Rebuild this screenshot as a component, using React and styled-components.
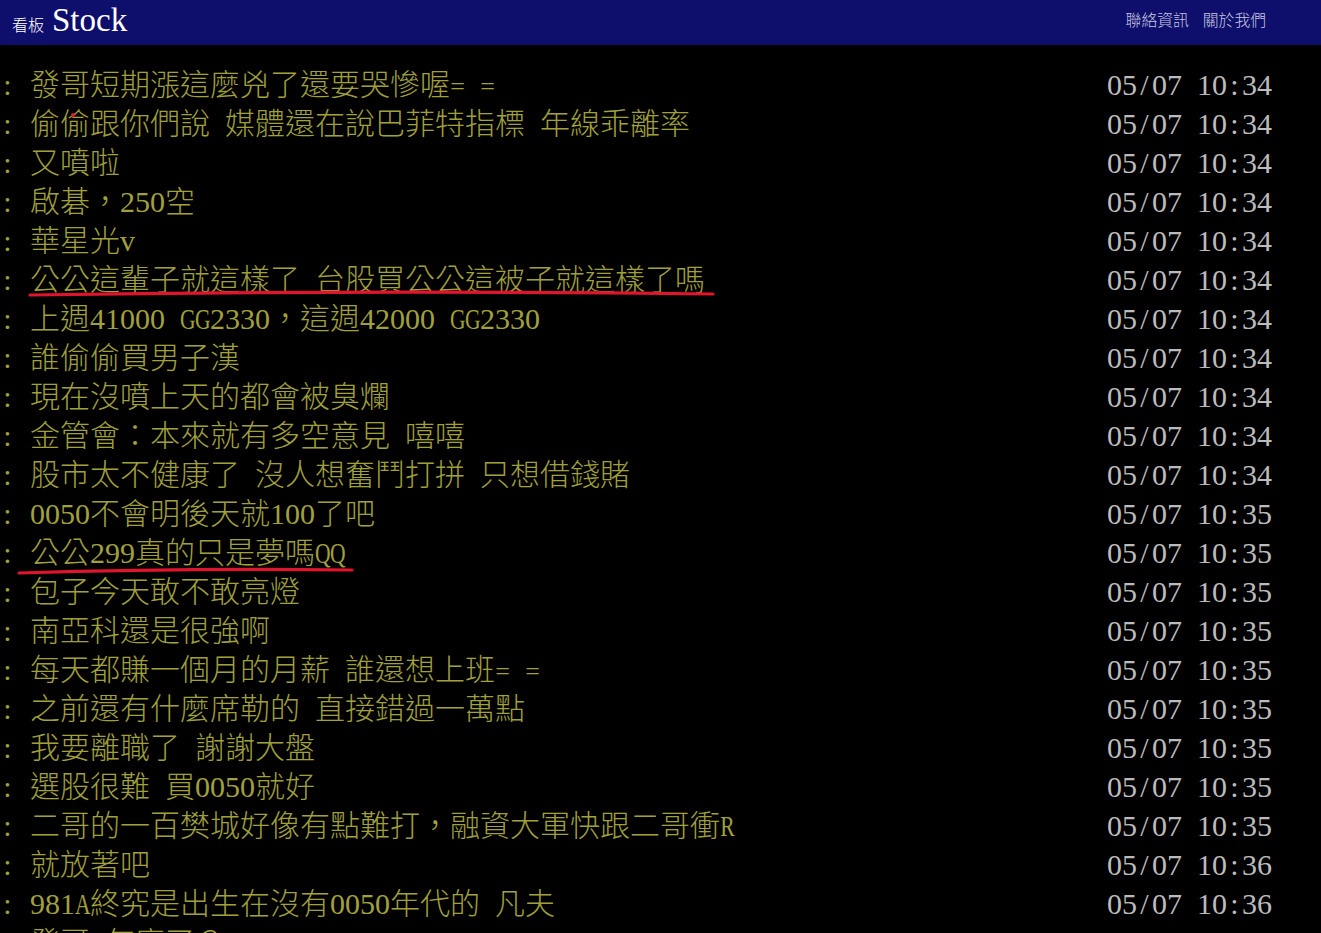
import React from "react";
import styled, { createGlobalStyle, css } from "styled-components";

const Global = createGlobalStyle`
  html, body { margin: 0; padding: 0; background: #000; }
  body { overflow: hidden; }
  #root { min-height: 100vh; background: #000; }
`;

const Page = styled.div`
  width: 1321px;
  height: 933px;
  overflow: hidden;
  background: #000;
  font-family: "Liberation Serif", "Noto Sans CJK TC", serif;
`;

const TopBar = styled.header`
  height: 45px;
  background: #0e0e6c;
  display: flex;
  justify-content: space-between;
  align-items: flex-start;
  padding: 0 55px 0 12px;
  box-sizing: border-box;
`;

const BoardGroup = styled.div`
  display: flex;
  align-items: baseline;
  gap: 8px;
  height: 45px;
  line-height: 40px;
`;

const BoardLabel = styled.span`
  font-family: "Noto Sans CJK TC", sans-serif;
  font-weight: 300;
  font-size: 16px;
  color: #fff;
`;

const BoardTitle = styled.span`
  font-family: "Liberation Serif", serif;
  font-size: 33px;
  color: #fff;
`;

const Links = styled.nav`
  display: flex;
  gap: 14px;
  padding-top: 8px;
`;

const TopLink = styled.a`
  font-family: "Noto Sans CJK TC", sans-serif;
  font-weight: 300;
  font-size: 15.8px;
  color: #c8c8e0;
  text-decoration: none;
  line-height: 24px;
`;

const List = styled.div`
  padding-top: 20px;
`;

const Row = styled.div`
  position: relative;
  display: flex;
  justify-content: space-between;
  height: 39px;
  line-height: 39px;
  font-size: 30px;
  font-weight: 300;
  white-space: nowrap;
`;

const Content = styled.span`
  color: #a0a03c;
`;

const DateTime = styled.span`
  color: #bcbcbc;
  margin-right: 49px;
`;

const Half = styled.span`
  display: inline-block;
  width: 15px;
  text-align: center;
`;

const Glyph = styled.span`
  display: inline-block;
  ${(p) =>
    p.$narrow &&
    css`
      font-size: 21.6px;
      transform: scaleY(1.39);
      transform-origin: 50% 26.8px;
    `}
  ${(p) =>
    p.$eq &&
    css`
      font-size: 26px;
    `}
`;

const Mark = styled.svg`
  position: absolute;
  left: 0;
  top: 0;
  overflow: visible;
  pointer-events: none;
`;

const Dot = styled.span`
  position: absolute;
  left: 71px;
  top: 9px;
  width: 4px;
  height: 4px;
  border-radius: 50%;
  background: #e0182c;
`;

function Mono({ text }) {
  const out = [];
  let buf = "";
  const flush = (k) => {
    if (buf) {
      out.push(<React.Fragment key={"f" + k}>{buf}</React.Fragment>);
      buf = "";
    }
  };
  [...text].forEach((ch, i) => {
    const code = ch.codePointAt(0);
    if (code < 0x2e80) {
      flush(i);
      out.push(
        <Half key={i}>
          <Glyph $narrow={/[A-Z]/.test(ch)} $eq={ch === "="}>
            {ch === " " ? "\u00a0" : ch}
          </Glyph>
        </Half>
      );
    } else {
      buf += ch;
    }
  });
  flush("end");
  return <>{out}</>;
}

const pushes = [
  ["發哥短期漲這麼兇了還要哭慘喔= =", "05/07 10:34"],
  ["偷偷跟你們說 媒體還在說巴菲特指標 年線乖離率", "05/07 10:34", "dot"],
  ["又噴啦", "05/07 10:34"],
  ["啟碁，250空", "05/07 10:34"],
  ["華星光v", "05/07 10:34"],
  ["公公這輩子就這樣了 台股買公公這被子就這樣了嗎", "05/07 10:34", "line1"],
  ["上週41000 GG2330，這週42000 GG2330", "05/07 10:34"],
  ["誰偷偷買男子漢", "05/07 10:34"],
  ["現在沒噴上天的都會被臭爛", "05/07 10:34"],
  ["金管會：本來就有多空意見 嘻嘻", "05/07 10:34"],
  ["股市太不健康了 沒人想奮鬥打拼 只想借錢賭", "05/07 10:34"],
  ["0050不會明後天就100了吧", "05/07 10:35"],
  ["公公299真的只是夢嗎QQ", "05/07 10:35", "line2"],
  ["包子今天敢不敢亮燈", "05/07 10:35"],
  ["南亞科還是很強啊", "05/07 10:35"],
  ["每天都賺一個月的月薪 誰還想上班= =", "05/07 10:35"],
  ["之前還有什麼席勒的 直接錯過一萬點", "05/07 10:35"],
  ["我要離職了 謝謝大盤", "05/07 10:35"],
  ["選股很難 買0050就好", "05/07 10:35"],
  ["二哥的一百樊城好像有點難打，融資大軍快跟二哥衝R", "05/07 10:35"],
  ["就放著吧", "05/07 10:36"],
  ["981A終究是出生在沒有0050年代的 凡夫", "05/07 10:36"],
  ["發哥 怎麼了？", "05/07 10:36"],
];

function Underline({ kind }) {
  if (kind === "line1") {
    return (
      <Mark width="1" height="1">
        <path
          d="M30 35 Q 370 30 713 34"
          stroke="#e0142c"
          strokeWidth="3.2"
          strokeLinecap="round"
          fill="none"
        />
      </Mark>
    );
  }
  if (kind === "line2") {
    return (
      <Mark width="1" height="1">
        <path
          d="M19 40 Q 180 35 352 37"
          stroke="#e0142c"
          strokeWidth="3.2"
          strokeLinecap="round"
          fill="none"
        />
      </Mark>
    );
  }
  if (kind === "dot") return <Dot />;
  return null;
}

export default function App() {
  return (
    <Page>
      <Global />
      <TopBar>
        <BoardGroup>
          <BoardLabel>看板</BoardLabel>
          <BoardTitle>Stock</BoardTitle>
        </BoardGroup>
        <Links>
          <TopLink href="#">聯絡資訊</TopLink>
          <TopLink href="#">關於我們</TopLink>
        </Links>
      </TopBar>
      <List>
        {pushes.map(([text, time, mark], i) => (
          <Row key={i}>
            <Content>
              <Mono text={": " + text} />
            </Content>
            <DateTime>
              <Mono text={time} />
            </DateTime>
            <Underline kind={mark} />
          </Row>
        ))}
      </List>
    </Page>
  );
}
